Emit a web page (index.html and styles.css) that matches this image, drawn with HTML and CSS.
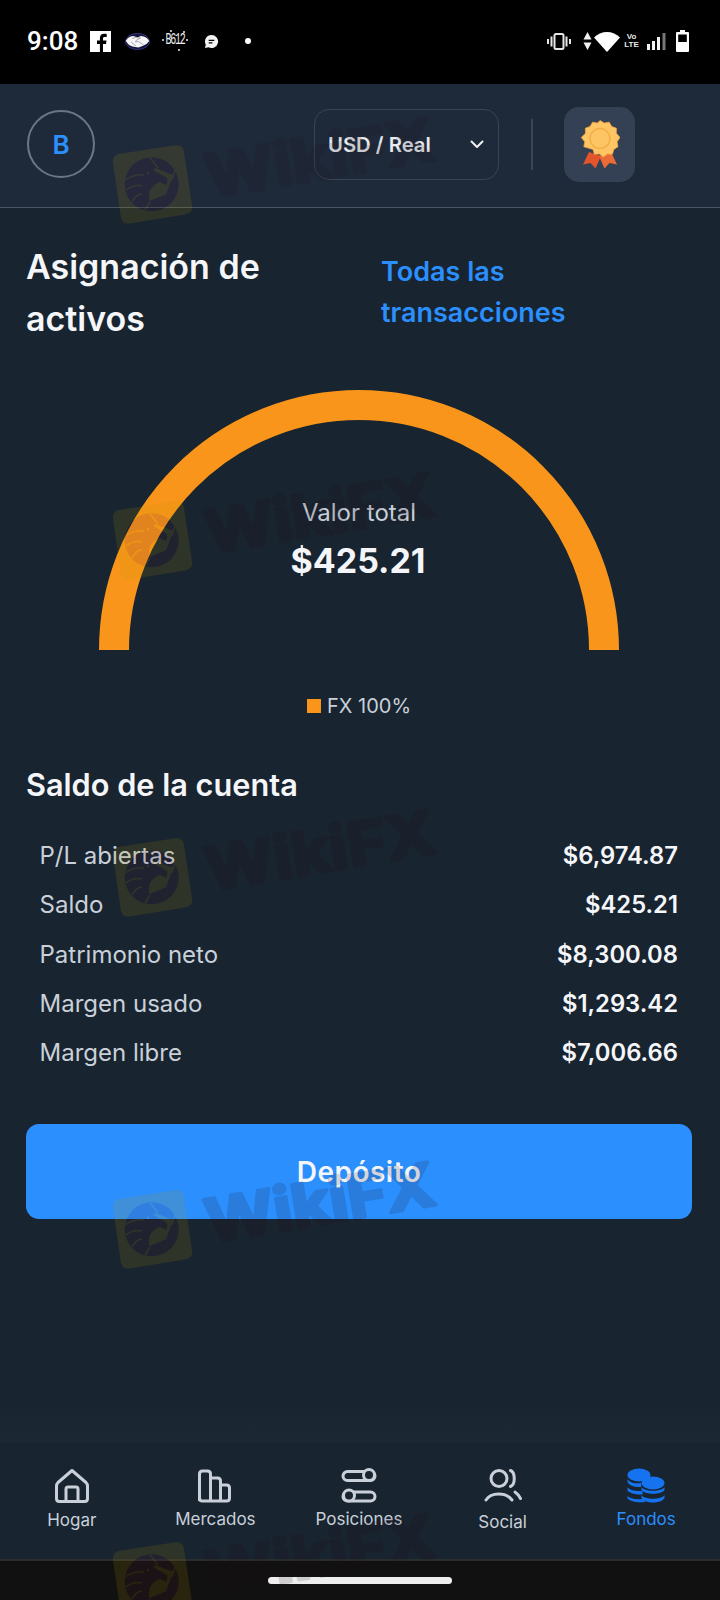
FILE: index.html
```html
<!DOCTYPE html>
<html lang="es">
<head>
<meta charset="utf-8">
<title>Fondos</title>
<link rel="stylesheet" href="styles.css">
</head>
<body>
<div class="phone">
  <div class="status">
    <div class="status-left">
      <span class="time">9:08</span>
      <svg class="fb" viewBox="0 0 21 21"><rect width="21" height="21" fill="#fff"/><path d="M13 21v-8h3l.5-3.400H13V7.600c0-1 .4-1.600 1.700-1.600h2V3c-.5 0-1.500-.2-2.600-.2-2.600 0-4.200 1.500-4.200 4.300v2.500H7V13h2.900v8z" fill="#000"/></svg>
      <svg class="shake" viewBox="0 0 25 17"><ellipse cx="12.500" cy="8.500" rx="12" ry="8" fill="#14143c" stroke="#34347e"/><path d="M.8 8Q3 3.500 8 3l4.500 1.200L16 3q6 .5 8.200 5-2 3.500-6.700 5l-4 1.500Q6 13.800 3.500 11.500z" fill="#f6f6f6"/><path d="M7 5.500l4-1 4.500.5-4 2 -1 2 3-.5 5 3.500M6 9l5 4" fill="none" stroke="#8a8a98" stroke-width=".7"/></svg>
      <span class="b612"><span class="b612-t">B612</span></span>
      <svg class="chat" viewBox="0 0 16 16"><path d="M8 1a7 7 0 1 1-3.200 13.200L1 15l.9-3.600A7 7 0 0 1 8 1z" fill="#f2f2f2"/><path d="M5 6h6v1.500H5zM5 8.700h4v1.500H5z" fill="#000"/></svg>
      <span class="dot"></span>
    </div>
    <div class="status-right">
      <svg class="vib" viewBox="0 0 24 17"><rect x="7.500" y="1" width="9" height="15" rx="1.500" fill="none" stroke="#e6e6e6" stroke-width="2"/><path d="M4.500 3.500v10M1 6v5M19.500 3.500v10M23 6v5" stroke="#e6e6e6" stroke-width="2" fill="none"/></svg>
      <svg class="updown" viewBox="0 0 9 18"><path d="M4.500 0L8.500 7.500H.5zM.5 10.500h8L4.500 18z" fill="#f0f0f0"/></svg>
      <svg class="wifi" viewBox="0 0 26 21"><path d="M13 21L0 6.500C3.500 3 8 1 13 1s9.500 2 13 5.500z" fill="#fff"/></svg>
      <span class="volte"><span>Vo</span><span>LTE</span></span>
      <svg class="signal" viewBox="0 0 19 17"><path d="M0 11h3v6H0zM5 8h3v9H5zM10 4h3v13h-3z" fill="#f2f2f2"/><path d="M15.500 0h3v17h-3z" fill="#777"/></svg>
      <svg class="battery" viewBox="0 0 13 22"><path d="M4 0h5v2h3a1 1 0 0 1 1 1v18a1 1 0 0 1-1 1H1a1 1 0 0 1-1-1V3a1 1 0 0 1 1-1h3z" fill="#fff"/><rect x="2.200" y="4.500" width="8.600" height="7.500" fill="#000"/></svg>
    </div>
  </div>

  <header class="header">
    <div class="avatar">B</div>
    <div class="select"><span>USD / Real</span>
      <svg class="chev" viewBox="0 0 14 9"><path d="M1.500 1.500L7 7l5.500-5.500" fill="none" stroke="#f0f2f5" stroke-width="2" stroke-linecap="round" stroke-linejoin="round"/></svg>
    </div>
    <div class="vline"></div>
    <div class="badge">
      <svg class="medal" viewBox="0 0 40 50">
        <path d="M9 32L3 44.500l7.500-1.500 5 5.500L21 36z" fill="#e2542a"/>
        <path d="M31 32l6 12.500-7.500-1.500-5 5.500L19 36z" fill="#ea6b35"/>
        <path d="M20 .5l4.300 2.600 4.900-.9 2.500 4.300 4.700 1.700-.1 5 3.700 4.300-3 4.300 1 4.900-4.200 2.700-1.400 4.800-5-.2-4 3-4-3-5 .2-1.400-4.800L3.800 26.700l1-4.900-3.500-4.300L5.500 13.200l-.1-5 4.700-1.700 2.500-4.300 4.900.9z" fill="#fdc564" stroke="#f5a63f" stroke-width=".8"/>
        <circle cx="20" cy="18.500" r="10" fill="#fdc564" stroke="#f3ae48" stroke-width="1.500"/>
      </svg>
    </div>
  </header>

  <main class="main">
    <section class="top-row">
      <h1 class="title">Asignación de activos</h1>
      <a class="all-link">Todas las transacciones</a>
    </section>

    <section class="gauge">
      <svg class="arc" viewBox="0 0 520 260"><path d="M15 260a245 245 0 0 1 490 0" fill="none" stroke="#f9951a" stroke-width="30"/></svg>
      <div class="gauge-text">
        <div class="gauge-label">Valor total</div>
        <div class="gauge-value">$425.21</div>
      </div>
    </section>

    <div class="legend"><span class="swatch"></span><span>FX 100%</span></div>

    <h2 class="balance-title">Saldo de la cuenta</h2>
    <dl class="rows">
      <div class="row"><dt>P/L abiertas</dt><dd>$6,974.87</dd></div>
      <div class="row"><dt>Saldo</dt><dd>$425.21</dd></div>
      <div class="row"><dt>Patrimonio neto</dt><dd>$8,300.08</dd></div>
      <div class="row"><dt>Margen usado</dt><dd>$1,293.42</dd></div>
      <div class="row"><dt>Margen libre</dt><dd>$7,006.66</dd></div>
    </dl>
    <button class="deposit">Depósito</button>
  </main>

  <nav class="nav">
    <div class="nav-item">
      <svg class="nav-icon" viewBox="0 0 36 36"><path d="M18 2.500L4 14.500Q2.500 16 2.500 18v12.500q0 3 3 3h25q3 0 3-3V18q0-2-1.500-3.500zM12 33V21q0-2 2-2h8q2 0 2 2v12" fill="none" stroke="#c9d0da" stroke-width="3" stroke-linejoin="round"/></svg>
      <span class="nav-label label-low">Hogar</span>
    </div>
    <div class="nav-item">
      <svg class="nav-icon" viewBox="0 0 36 36"><path d="M2.500 33V6q0-3 3-3h5q3 0 3 3v27M13.500 10h7q3 0 3 3v20M23.500 17h6q3 0 3 3v10q0 3-3 3h-24q-3 0-3-3" fill="none" stroke="#c9d0da" stroke-width="3" stroke-linejoin="round"/></svg>
      <span class="nav-label">Mercados</span>
    </div>
    <div class="nav-item">
      <svg class="nav-icon" viewBox="0 0 36 36"><rect x="2" y="3.500" width="32" height="9" rx="4.500" fill="none" stroke="#c9d0da" stroke-width="3"/><circle cx="28" cy="7" r="5.500" fill="#18242f" stroke="#c9d0da" stroke-width="3"/><rect x="2" y="24" width="32" height="9" rx="4.500" fill="none" stroke="#c9d0da" stroke-width="3"/><circle cx="8" cy="27.500" r="5.500" fill="#18242f" stroke="#c9d0da" stroke-width="3"/></svg>
      <span class="nav-label">Posiciones</span>
    </div>
    <div class="nav-item">
      <svg class="nav-icon wide" viewBox="0 0 38 36"><circle cx="15" cy="10.500" r="8" fill="none" stroke="#c9d0da" stroke-width="3"/><path d="M26.500 2.500c5 2 5 14 0 16M2 32c5-8 20-8 26 0M31 24q3 2 5.500 6.500" fill="none" stroke="#c9d0da" stroke-width="3" stroke-linecap="round"/></svg>
      <span class="nav-label label-lower">Social</span>
    </div>
    <div class="nav-item active">
      <svg class="nav-icon wide" viewBox="0 0 38 36"><g fill="#1673f0"><ellipse cx="12" cy="7" rx="11.500" ry="6.500"/><path d="M.5 11c2 4 9 5 14 3.700-.5 1.500-.5 3-.3 4.300C9 19.600 2.500 18 .5 14zM.5 19.500c3 3 9 4 14.500 3.300l1 3.500C10 27 3 25.500.5 22.500zM.5 28c3 3 9 3.800 15 3l3 3c-8 1-15-.5-18-3.500z"/><ellipse cx="26" cy="15" rx="11.500" ry="6.500"/><path d="M14.500 19c3 5 20 5 23 0v3c-3 5-20 5-23 0zM14.500 27c3 5 20 5 23 0v3c-3 6-20 6-23 0z"/></g></svg>
      <span class="nav-label">Fondos</span>
    </div>
  </nav>

  <div class="home-bar"><span class="home-pill"></span></div>

  <div class="marks" aria-hidden="true">
    <svg class="mark m1" viewBox="0 0 340 90"><use href="#wm"/><text class="mark-text" x="97" y="54" transform="rotate(-9.500 97 54)" textLength="232" lengthAdjust="spacingAndGlyphs">WikiFX</text></svg>
    <svg class="mark m2" viewBox="0 0 340 90"><use href="#wm"/><text class="mark-text" x="97" y="54" transform="rotate(-9.500 97 54)" textLength="232" lengthAdjust="spacingAndGlyphs">WikiFX</text></svg>
    <svg class="mark m3" viewBox="0 0 340 90"><use href="#wm"/><text class="mark-text" x="97" y="54" transform="rotate(-9.500 97 54)" textLength="232" lengthAdjust="spacingAndGlyphs">WikiFX</text></svg>
    <svg class="mark m4" viewBox="0 0 340 90"><use href="#wm"/><text class="mark-text" x="97" y="54" transform="rotate(-9.500 97 54)" textLength="232" lengthAdjust="spacingAndGlyphs">WikiFX</text></svg>
    <svg class="mark m5" viewBox="0 0 340 90"><use href="#wm"/><text class="mark-text" x="97" y="54" transform="rotate(-9.500 97 54)" textLength="232" lengthAdjust="spacingAndGlyphs">WikiFX</text></svg>
  </div>

  <svg class="defs" width="0" height="0">
    <defs>
      <g id="wm">
        <path d="M8 9.800L63 1.200Q71 0 72 8L80 61Q81.500 69 73 70.400L18 79.500Q10 81 8.800 73L1 19Q0 11 8 9.800z" fill="#bb9500"/>
        <circle cx="39.700" cy="40.300" r="27" fill="#571c3a"/>
        <path d="M43 23.700L61.300 31 54 50.300 35.700 57.700 30 48z" fill="#bb9500"/>
        <path d="M20 26Q32 22 43 27L55 34Q56 38 54 41L48 38Q42 40 38 46Q36 52 38 60L28 64Q14 50 20 26z" fill="#571c3a"/>
        <path d="M38 13.700L46 24M63 26L60 36M33 66L38 58M13 36Q22 30 32 31M14 46Q22 40 30 42M20 58Q24 50 30 50" fill="none" stroke="#bb9500" stroke-width="1.500"/>
        <circle cx="36" cy="29" r="1.300" fill="#bb9500"/>
      </g>
    </defs>
  </svg>
</div>
</body>
</html>
```

FILE: styles.css
```css
* { box-sizing: border-box; }
html, body { margin: 0; padding: 0; }
body { background: #18242f; font-family: Inter, "Noto Sans", sans-serif; color: #f4f6f9; }

.phone { position: relative; width: 720px; height: 1600px; display: flex; flex-direction: column; overflow: hidden; background: #18242f; }

/* status bar */
.status { height: 84px; background: #000; display: flex; justify-content: space-between; align-items: flex-start; padding: 28px 31px 0 27px; flex: none; }
.status-left, .status-right { display: flex; align-items: center; height: 26px; }
.time { font-family: "Roboto", sans-serif; font-weight: 500; font-size: 26px; color: #fff; width: 63px; }
.fb { width: 21px; height: 21px; }
.shake { width: 25px; height: 17px; margin-left: 14px; }
.b612 { position: relative; width: 24px; height: 22px; margin-left: 13px; display: flex; align-items: center; justify-content: center; }
.b612::before { content: ""; position: absolute; left: 7px; top: 0; width: 2px; height: 2px; border-radius: 50%; background: #eee; box-shadow: 13px 1px #eee, -8px 9px #eee, 16px 9px #eee, 8px 19px #eee; }
.b612-t { font-family: "Liberation Mono", monospace; font-size: 10px; line-height: 10px; color: #eee; letter-spacing: -1.200px; transform: scaleY(1.7); }
.chat { width: 15px; height: 15px; margin-left: 17px; }
.dot { width: 6px; height: 6px; border-radius: 50%; background: #fff; margin-left: 26px; }
.vib { width: 24px; height: 17px; }
.updown { width: 9px; height: 18px; margin-left: 12px; }
.wifi { width: 26px; height: 21px; margin-left: 2px; }
.volte { display: flex; flex-direction: column; align-items: center; width: 11px; margin-left: 6px; font-family: "Liberation Sans", sans-serif; font-weight: 700; font-size: 8px; line-height: 8px; color: #e8e8e8; }
.signal { width: 19px; height: 17px; margin-left: 10px; }
.battery { width: 13px; height: 22px; margin-left: 10px; }

/* header */
.header { height: 124px; flex: none; background: #1e2a3a; border-bottom: 1px solid #4a5461; display: flex; align-items: flex-start; padding: 26px 0 0 27px; }
.avatar { width: 68px; height: 68px; border-radius: 50%; border: 2px solid #6b7686; display: flex; align-items: center; justify-content: center; color: #2b8ffe; font-size: 26px; font-weight: 600; }
.select { width: 185px; height: 71px; margin-left: 219px; margin-top: -1px; border: 1px solid #3a4554; border-radius: 15px; display: flex; align-items: center; justify-content: space-between; padding: 0 14px 0 13px; font-size: 20.300px; font-weight: 600; color: #e9ebef; }
.chev { width: 14px; height: 9px; }
.vline { width: 2px; height: 51px; background: #3a4554; margin: 9px 0 0 32px; }
.badge { width: 71px; height: 75px; margin: -3px 0 0 31px; background: #344155; border-radius: 15px; display: flex; align-items: center; justify-content: center; }
.medal { width: 40px; height: 50px; }

/* main */
.main { flex: 1; display: flex; flex-direction: column; padding: 0 28px 0 26px; min-height: 0; background: linear-gradient(to bottom, #18242f calc(100% - 40px), #1c2935 100%); }
.top-row { display: flex; align-items: flex-start; padding-top: 33px; }
.title { width: 355px; flex: none; padding-right: 40px; margin: 0; font-size: 34px; line-height: 51.500px; font-weight: 600; color: #f4f6f9; }
.all-link { width: 240px; margin: 10px 0 0; font-size: 27px; line-height: 41px; font-weight: 600; color: #2b8ffe; }

.gauge { position: relative; width: 520px; height: 260px; margin: 46px 0 0 73px; }
.arc { display: block; width: 520px; height: 260px; }
.gauge-text { position: absolute; left: 0; right: 0; top: 108px; text-align: center; }
.gauge-label { font-size: 24px; line-height: 30px; color: #c9d0da; }
.gauge-value { font-size: 34px; line-height: 46px; margin: 10px 2px 0 0; font-weight: 700; color: #f4f6f9; }

.legend { display: flex; align-items: center; justify-content: center; gap: 6px; margin: 43px 0 0 0; font-size: 20px; line-height: 26px; color: #c9d0da; }
.swatch { width: 14px; height: 14px; background: #f9951a; }

.balance-title { margin: 45px 0 0; font-size: 30.700px; line-height: 42px; font-weight: 600; color: #f4f6f9; }
.rows { margin: 25px 0 0; padding: 0 14px 0 13.500px; }
.row { display: flex; justify-content: space-between; align-items: center; height: 49.300px; }
.row dt { font-size: 24px; color: #c9d0da; }
.row dd { margin: 0; font-size: 23.800px; font-weight: 600; color: #f4f6f9; }
.deposit { margin-top: 47px; height: 95px; width: 666px; flex: none; border: 0; border-radius: 13px; background: #2b8ffe; color: #f4f6f9; font-family: inherit; font-size: 28px; font-weight: 600; letter-spacing: .5px; }

/* nav */
.nav { flex: none; height: 116px; display: grid; grid-template-columns: repeat(5, 1fr); padding: 25px 2px 0 0; }
.nav-item { display: flex; flex-direction: column; align-items: center; color: #c9d0da; }
.nav-icon { width: 36px; height: 36px; flex: none; }
.nav-icon.wide { width: 38px; }
.nav-label { margin-top: 1px; font-size: 17px; line-height: 28px; }
.label-low { margin-top: 2px; }
.label-lower { margin-top: 4px; }
.active { color: #2b8ffe; }

.home-bar { flex: none; height: 41px; background: #111; border-top: 2px solid #2a2e31; display: flex; justify-content: center; padding-top: 16px; }
.home-pill { width: 184px; height: 7px; border-radius: 4px; background: #eee; }

/* watermark */
.marks { position: absolute; inset: 0; pointer-events: none; }
.mark { position: absolute; left: 112px; width: 340px; height: 90px; overflow: visible; opacity: .14; }
.m1 { top: 144px; }
.m2 { top: 500px; }
.m3 { top: 837px; }
.m4 { top: 1189px; }
.m5 { top: 1541px; }
.mark-text { font-family: Inter, sans-serif; font-weight: 700; font-size: 60px; fill: #200c18; stroke: #200c18; stroke-width: 3.500px; stroke-linejoin: round; }
.defs { position: absolute; }
```
